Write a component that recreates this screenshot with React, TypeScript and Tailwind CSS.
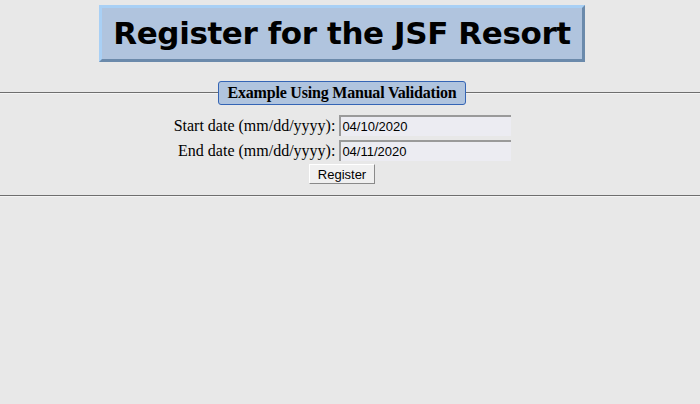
export default function App() {
  return (
    <div className="min-h-[404px] bg-[#e8e8e8] pt-[5px] font-['Liberation_Serif',serif] text-black">
      <div className="flex pr-4 justify-center">
        <h1 className="w-[486px] h-[57px] flex items-center justify-center border-[3px] border-t-[#a9d0f5] border-l-[#a9d0f5] border-b-[#6b8aab] border-r-[#6b8aab] bg-[#b0c4de] font-['DejaVu_Sans',sans-serif] text-[31px] font-bold tracking-[-0.4px]">
          Register for the JSF Resort
        </h1>
      </div>

      <div className="mt-[19px] flex items-center">
        <div className="h-[2px] w-[218px] border-t border-t-[#6e6e6e] border-b border-b-[#f4f4f4]" />
        <div className="rounded-[3px] border border-[#3565b5] bg-[#b0c4de] w-[248px] h-[24px] flex items-center justify-center text-[16px] font-bold tracking-[-0.2px]">
          Example Using Manual Validation
        </div>
        <div className="h-[2px] flex-1 border-t border-t-[#6e6e6e] border-b border-b-[#f4f4f4]" />
      </div>

      <div className="flex flex-col items-center pr-4 pt-[10px] pb-[10px] gap-[4px]">
        <div className="grid grid-cols-[auto_172px] items-center gap-x-[4px] gap-y-[4px] pl-[1px]">
          <span className="text-right text-[16px] leading-[19px]">Start date (mm/dd/yyyy):</span>
          <div className="h-[21px] border-t-2 border-l-2 border-[#9a9a9a] bg-[#ececf2] pl-[1px] font-['Liberation_Sans',sans-serif] text-[13px] leading-[19px]">
            04/10/2020
          </div>
          <span className="text-right text-[16px] leading-[19px]">End date (mm/dd/yyyy):</span>
          <div className="h-[21px] border-t-2 border-l-2 border-[#9a9a9a] bg-[#ececf2] pl-[1px] font-['Liberation_Sans',sans-serif] text-[13px] leading-[19px]">
            04/11/2020
          </div>
        </div>
        <button className="-mt-px h-[20px] w-[66px] border border-t-white border-l-white border-b-[#8a8a8a] border-r-[#8a8a8a] bg-[#f0f0f0] font-['Liberation_Sans',sans-serif] text-[13px] leading-[17px]">
          Register
        </button>
      </div>

      <div className="mt-px h-[2px] border-t border-t-[#6e6e6e] border-b border-b-[#f4f4f4]" />
    </div>
  );
}
